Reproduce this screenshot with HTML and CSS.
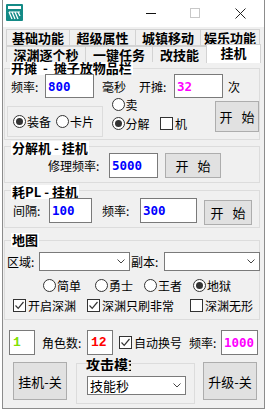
FILE: index.html
```html
<!DOCTYPE html>
<html>
<head>
<meta charset="utf-8">
<link rel="stylesheet" href="styles.css">
</head>
<body>
<div class="window">
  <div class="titlebar">
    <svg class="appicon" width="17" height="17" viewBox="0 0 17 17">
      <rect x="0" y="0" width="17" height="17" rx="1" fill="#148a86"/>
      <rect x="2" y="2" width="13" height="3" fill="#fff"/>
      <path d="M3 8 L6 15 M6 8 L9 15 M9 8 L12 15 M12 8 L14 12" stroke="#fff" stroke-width="1.3" fill="none"/>
      <path d="M3 8 H14" stroke="#fff" stroke-width="1"/>
    </svg>
    <span class="tb-min"></span>
    <span class="tb-max"></span>
    <svg class="tb-close" width="11" height="11" viewBox="0 0 11 11">
      <path d="M0.5 0.5 L10.5 10.5 M10.5 0.5 L0.5 10.5" stroke="#222" stroke-width="1"/>
    </svg>
  </div>

  <div class="tabs">
    <div class="tabrow">
      <div class="tab w63">基础功能</div>
      <div class="tab w66">超级属性</div>
      <div class="tab w65">城镇移动</div>
      <div class="tab w60">娱乐功能</div>
    </div>
    <div class="tabrow">
      <div class="tab w79">深渊逐个秒</div>
      <div class="tab w67">一键任务</div>
      <div class="tab w54">改技能</div>
      <div class="tab sel">挂机</div>
    </div>
  </div>

  <div class="panel">
    <div class="group g1">
      <div class="legend lg1">开摊 - 摊子放物品栏</div>
      <div class="row rowA">
        <span>频率:</span>
        <div class="num blue">800</div>
        <span class="ml8">毫秒</span>
        <span>开摊:</span>
        <div class="num magenta">32</div>
        <span class="ml5">次</span>
      </div>
      <div class="rowB">
        <div class="subbox">
          <label class="radio on"><i></i>装备</label>
          <label class="radio ml5"><i></i>卡片</label>
        </div>
        <div class="radcol">
          <label class="radio"><i></i>卖</label>
          <label class="radio on"><i></i>分解</label>
        </div>
        <label class="check cb-ji"><i></i>机</label>
        <div class="btn btn1"><span>开</span><span>始</span></div>
      </div>
    </div>

    <div class="group g2">
      <div class="legend lg2">分解机 - 挂机</div>
      <div class="row rowC">
        <span>修理频率:</span>
        <div class="num blue">5000</div>
        <div class="btn btn2"><span>开</span><span>始</span></div>
      </div>
    </div>

    <div class="group g3">
      <div class="legend lg3">耗PL - 挂机</div>
      <div class="row rowD">
        <span>间隔:</span>
        <div class="num blue">100</div>
        <span class="ml10">频率:</span>
        <div class="num blue">300</div>
        <div class="btn btn3"><span>开</span><span>始</span></div>
      </div>
    </div>

    <div class="group g4">
      <div class="legend lg4">地图</div>
      <div class="row rowE">
        <span>区域:</span>
        <div class="combo cb-area"><svg class="chev" width="8" height="5" viewBox="0 0 8 5"><path d="M0.5 0.5 L4 4 L7.5 0.5" stroke="#444" fill="none"/></svg></div>
        <span>副本:</span>
        <div class="combo cb-dungeon"><svg class="chev" width="8" height="5" viewBox="0 0 8 5"><path d="M0.5 0.5 L4 4 L7.5 0.5" stroke="#444" fill="none"/></svg></div>
      </div>
      <div class="row rowF">
        <label class="radio"><i></i>简单</label>
        <label class="radio"><i></i>勇士</label>
        <label class="radio"><i></i>王者</label>
        <label class="radio on"><i></i>地狱</label>
      </div>
      <div class="row rowG">
        <label class="check on"><i><svg width="11" height="11" viewBox="0 0 11 11"><path d="M1.5 5.5 L4.2 8.3 L9.5 2" stroke="#333" stroke-width="1.2" fill="none"/></svg></i>开启深渊</label>
        <label class="check on"><i><svg width="11" height="11" viewBox="0 0 11 11"><path d="M1.5 5.5 L4.2 8.3 L9.5 2" stroke="#333" stroke-width="1.2" fill="none"/></svg></i>深渊只刷非常</label>
        <label class="check"><i></i>深渊无形</label>
      </div>
    </div>

    <div class="row rowH">
      <div class="num green mono2">1</div>
      <span class="ml7">角色数:</span>
      <div class="num red mono2">12</div>
      <label class="check on ml6"><i><svg width="11" height="11" viewBox="0 0 11 11"><path d="M1.5 5.5 L4.2 8.3 L9.5 2" stroke="#333" stroke-width="1.2" fill="none"/></svg></i>自动换号</label>
      <span>频率:</span>
      <div class="num magenta">1000</div>
    </div>

    <div class="rowI">
      <div class="btn bigbtn">挂机-关</div>
      <div class="group g5">
        <div class="legend lg5">攻击模式</div>
        <div class="combo cb-attack"><span>技能秒</span><svg class="chev" width="8" height="5" viewBox="0 0 8 5"><path d="M0.5 0.5 L4 4 L7.5 0.5" stroke="#444" fill="none"/></svg></div>
      </div>
      <div class="btn bigbtn">升级-关</div>
    </div>
  </div>
</div>
</body>
</html>
```

FILE: styles.css
```css
* { box-sizing: border-box; }
body {
  margin: 0;
  width: 267px;
  height: 415px;
  background: #fff;
  font-family: "Noto Sans CJK SC", "Noto Sans", sans-serif;
  font-size: 12px;
  color: #000;
  overflow: hidden;
}
.window {
  margin-left: 2px;
  width: 263px;
  height: 409px;
  border: 1px solid #8c8c8c;
  border-top: none;
  background: #f0f0f0;
  display: flex;
  flex-direction: column;
}
.titlebar {
  height: 27px;
  background: #fff;
  display: flex;
  align-items: flex-start;
  flex: none;
}
.appicon { margin: 4px 0 0 3px; }
.tb-min { width: 10px; height: 1px; background: #111; margin: 13px 0 0 123px; }
.tb-max { width: 10px; height: 10px; border: 1px solid #c8c8c8; margin: 8px 0 0 34px; }
.tb-close { margin: 8px 0 0 35px; }

.tabs {
  margin: 2px 0 0 3px;
  position: relative;
  z-index: 2;
  flex: none;
}
.tabrow { display: flex; height: 17px; }
.tabrow + .tabrow { height: 16px; }
.tab {
  border: 1px solid #d3d3d3;
  border-right: none;
  background: #f0f0f0;
  font-weight: 700;
  font-size: 13px;
  line-height: 14px;
  display: flex;
  align-items: center;
  justify-content: center;
  white-space: nowrap;
}
.tabrow + .tabrow .tab { border-bottom: none; }
.w63 { width: 63px; } .w66 { width: 66px; } .w65 { width: 65px; } .w60 { width: 60px; border-right: 1px solid #d3d3d3; }
.w79 { width: 79px; } .w67 { width: 67px; } .w54 { width: 54px; }
.tab.sel {
  width: 55px;
  height: 19px;
  margin-top: -2px;
  background: #fff;
  border: 1px solid #d3d3d3;
  border-bottom: none;
  padding-bottom: 2px;
}

.panel {
  flex: 1;
  display: flex;
  flex-direction: column;
  position: relative;
  z-index: 1;
}

.group {
  border: 1px solid #dcdcdc;
  margin-left: 1px;
  width: 256px;
  display: flex;
  flex-direction: column;
}
.legend {
  align-self: flex-start;
  background: #fff;
  font-weight: 700;
  font-size: 13px;
  line-height: 14px;
  height: 14px;
  padding: 0 1px;
  white-space: nowrap;
}
.g1 { margin-top: 6px; padding-bottom: 2px; }
.lg1 { margin: -8px 0 0 5px; word-spacing: 3px; }
.g2 { margin-top: 6px; padding-bottom: 4px; }
.lg2 { margin: -6px 0 0 6px; }
.g3 { margin-top: 7px; padding-bottom: 2px; }
.lg3 { margin: -6px 0 0 6px; }
.g4 { margin-top: 12px; padding-bottom: 7px; }
.lg4 { margin: -8px 0 0 6px; }

.row { display: grid; align-items: center; }
.num {
  background: #fff;
  border: 1px solid #7a7a7a;
  height: 25px;
  display: flex;
  align-items: center;
  padding-left: 2px;
  font-family: "DejaVu Sans Mono", monospace;
  font-weight: 700;
  font-size: 12.5px;
}
.mono2 { font-family: "Liberation Mono", monospace; font-size: 13px; padding-left: 3px; }
.blue { color: #0000ff; }
.magenta { color: #ff00ff; }
.red { color: #ff0000; }
.green { color: #80e000; }
.ml5 { margin-left: 5px; }
.ml6 { margin-left: 6px; }
.ml7 { margin-left: 7px; }
.ml8 { margin-left: 8px; }
.ml10 { margin-left: 10px; }

.rowA {
  margin-top: -1px;
  padding-left: 6px;
  grid-template-columns: 34px 49px 45px 35px 49px auto;
  height: 24px;
}
.rowA .num { height: 24px; }

.rowB { display: flex; align-items: flex-start; height: 39px; }
.subbox {
  margin: 8px 0 0 2px;
  width: 100px;
  height: 31px;
  border: 1px solid #dcdcdc;
  display: flex;
  align-items: center;
  padding-left: 5px;
}
.radcol {
  margin-left: 9px;
  width: 51px;
  display: flex;
  flex-direction: column;
  gap: 6px;
}
.cb-ji { margin-top: 19px; }
.btn {
  background: #e1e1e1;
  border: 1px solid #adadad;
  display: flex;
  align-items: center;
  justify-content: center;
  font-size: 13px;
}
.btn span + span { margin-left: 9px; }
.btn1 { margin: 3px 0 0 28px; width: 46px; height: 31px; }

.radio, .check {
  display: flex;
  align-items: center;
  height: 13px;
  line-height: 13px;
  white-space: nowrap;
}
.radio i {
  width: 13px; height: 13px;
  border: 1px solid #333;
  border-radius: 50%;
  background: #fff;
  margin-right: 1px;
  display: flex; align-items: center; justify-content: center;
  flex: none;
}
.radio.on i::after {
  content: "";
  width: 7px; height: 7px;
  border-radius: 50%;
  background: #333;
}
.check i {
  width: 13px; height: 13px;
  border: 1px solid #333;
  background: #fff;
  margin-right: 2px;
  display: flex; align-items: center; justify-content: center;
  flex: none;
}

.rowC {
  margin-top: -2px;
  padding-left: 43px;
  grid-template-columns: 61px 49px auto;
}
.btn2 { margin-left: 7px; width: 56px; height: 25px; }

.rowD {
  margin-top: -1px;
  padding-left: 8px;
  grid-template-columns: 36px 43px 48px 57px auto;
  align-items: start;
  height: 27px;
}
.rowD > span { align-self: center; margin-top: -2px; }
.btn3 { margin: 2px 0 0 7px; width: 48px; height: 25px; }

.rowE {
  margin-top: 5px;
  padding-left: 2px;
  grid-template-columns: 32px 92px 33px auto;
  height: 18px;
}
.combo {
  background: #fff;
  border: 1px solid #7a7a7a;
  height: 19px;
  display: flex;
  align-items: center;
  justify-content: flex-end;
  padding-right: 4px;
}
.cb-area { width: 91px; }
.cb-dungeon { width: 96px; }

.rowF {
  margin-top: 9px;
  padding-left: 38px;
  grid-template-columns: 52px 49px 49px auto;
}
.rowG {
  margin-top: 7px;
  padding-left: 8px;
  grid-template-columns: 74px 103px auto;
}

.rowH {
  margin-top: 10px;
  padding-left: 6px;
  grid-template-columns: 26px 52px 26px 76px 32px 37px;
}

.rowI { display: flex; align-items: flex-start; margin-top: 7px; }
.bigbtn { margin-left: 10px; width: 54px; height: 38px; font-size: 13px; }
.bigbtn + .group + .bigbtn { margin-left: 8px; }
.g5 {
  margin: 1px 0 0 9px;
  width: 119px;
  height: 41px;
}
.lg5 {
  margin: -7px 0 0 8px;
  background: transparent;
  font-size: 14px;
  width: 46px;
  overflow: hidden;
}
.cb-attack {
  margin: 5px 0 0 10px;
  width: 99px;
  justify-content: space-between;
  padding-left: 2px;
  font-size: 13px;
}
```
